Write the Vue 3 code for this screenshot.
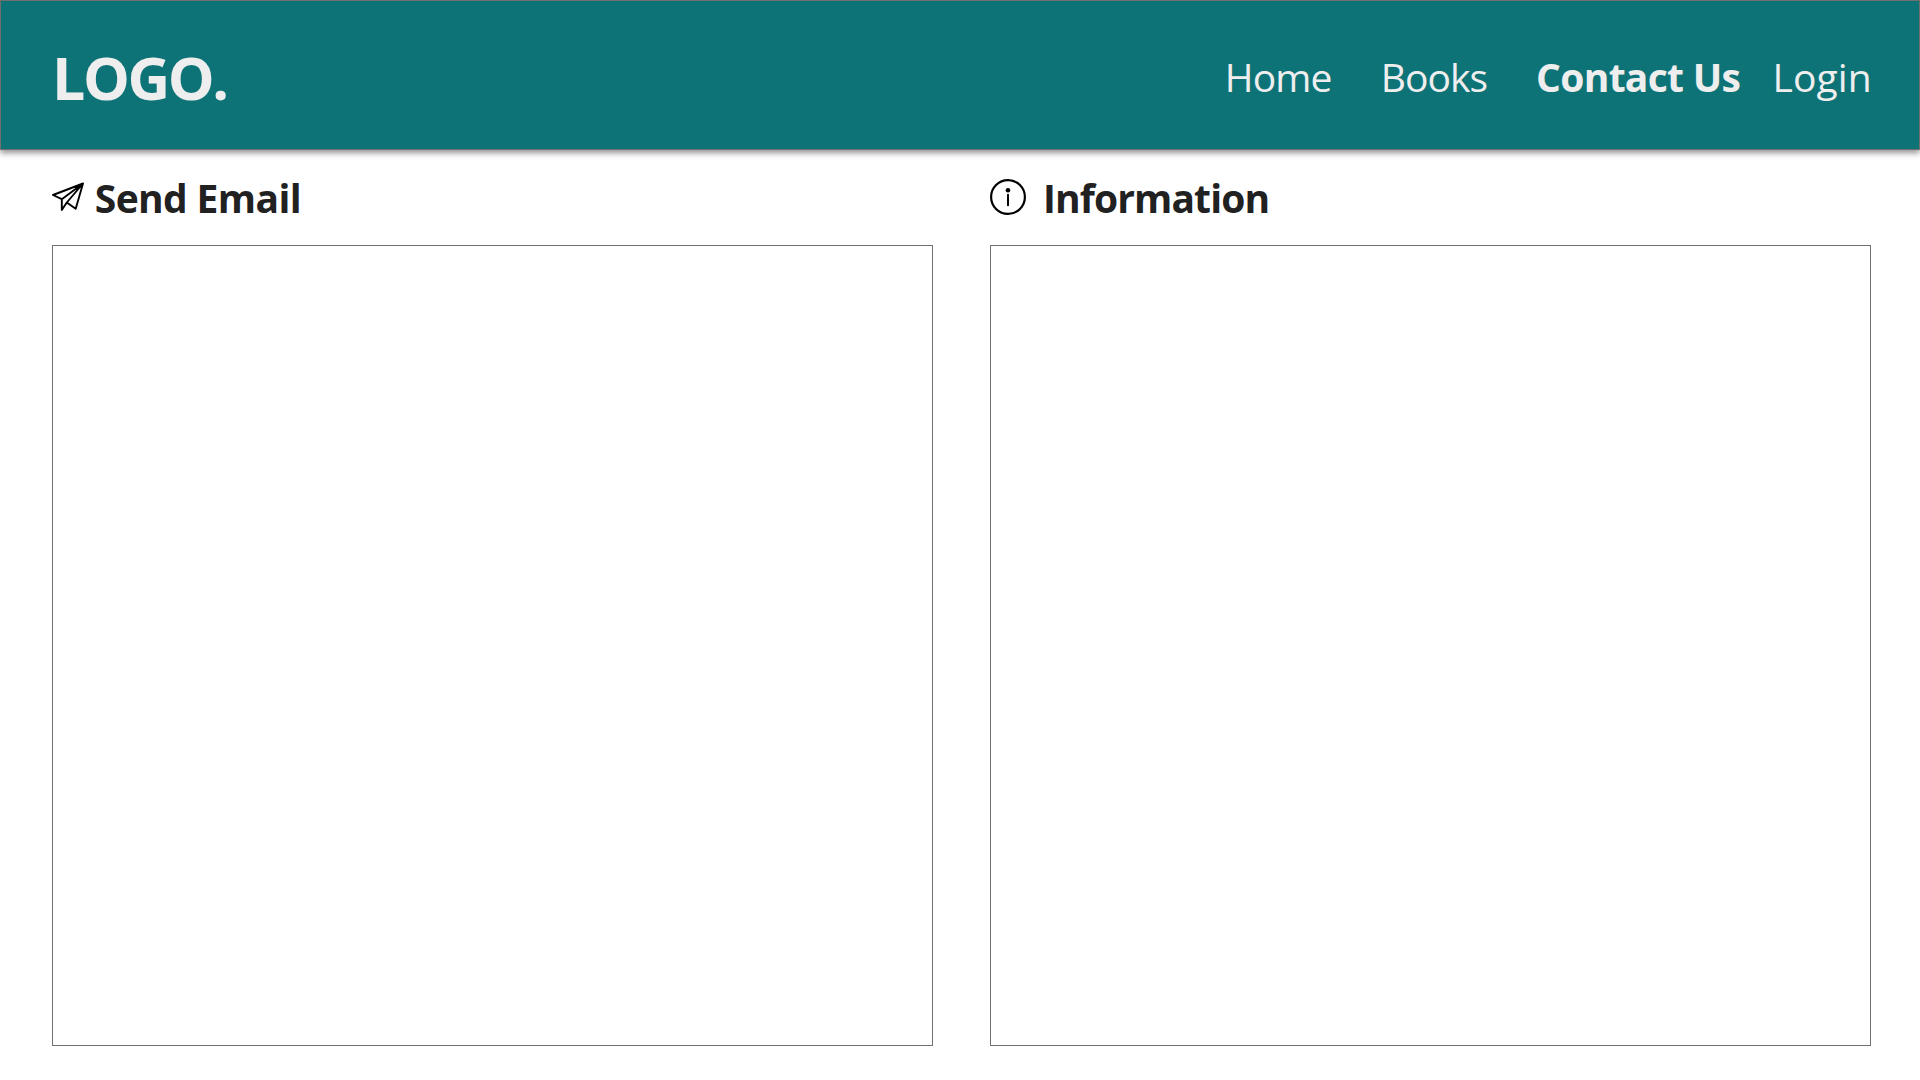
<script setup>
const links = [
  { label: 'Home', cls: 'home' },
  { label: 'Books', cls: 'books' },
  { label: 'Contact Us', cls: 'contact' },
  { label: 'Login', cls: 'login' },
]
</script>

<template>
  <div class="page">
    <header class="bar">
      <div class="logo">LOGO.</div>
      <nav class="nav">
        <a v-for="l in links" :key="l.label" :class="l.cls">{{ l.label }}</a>
      </nav>
    </header>
    <main class="columns">
      <section class="column">
        <h2 class="heading">
          <svg class="plane" width="33" height="30" viewBox="0 0 33 30" fill="none" stroke="#000" stroke-width="1.9" stroke-linejoin="round">
            <path d="M31 1.5 1 13l8.8 4.2zM31 1.5 9.8 17.2V28l5-7.5zM31 1.5 14.8 20.5l8.9 6.2z" />
          </svg>
          <span class="send">Send Email</span>
        </h2>
        <div class="panel"></div>
      </section>
      <section class="column">
        <h2 class="heading">
          <svg class="info" width="36" height="36" viewBox="0 0 36 36">
            <circle cx="18" cy="18" r="16.9" fill="none" stroke="#000" stroke-width="2.2" />
            <circle cx="18" cy="11.2" r="2.3" />
            <path d="M18 15.8v10.4" stroke="#000" stroke-width="2" stroke-linecap="round" />
          </svg>
          <span class="information">Information</span>
        </h2>
        <div class="panel"></div>
      </section>
    </main>
  </div>
</template>

<style>
body {
  margin: 0;
  background: #fff;
}
</style>

<style scoped>
.page {
  width: 1920px;
  height: 1080px;
  overflow: hidden;
  background: #fff;
  font-family: "Segoe UI", "Open Sans", "Noto Sans", sans-serif;
  font-size: 39px;
  line-height: 53px;
  white-space: nowrap;
}
.bar {
  box-sizing: border-box;
  height: 150px;
  display: flex;
  justify-content: space-between;
  border: 1px solid #707070;
  background: #0e7377;
  box-shadow: 0 3px 6px rgba(0, 0, 0, 0.43);
  color: #eee;
}
.logo {
  padding: 36px 0 0 51px;
  font-size: 59px;
  line-height: 80px;
  font-weight: 700;
  letter-spacing: -2.4px;
}
.nav {
  display: grid;
  grid-template-columns: 156px 155.3px 236.4px 146.5px;
  padding-top: 49px;
}
.home {
  letter-spacing: -0.85px;
}
.books {
  letter-spacing: -0.97px;
}
.contact {
  font-weight: 700;
  letter-spacing: -0.7px;
}
.login {
  letter-spacing: 0.1px;
}
.columns {
  display: flex;
  gap: 57px;
  padding: 21px 49px 0 52px;
}
.column {
  width: 881px;
}
.heading {
  display: flex;
  height: 53px;
  margin: 0 0 21px;
  font-size: 39px;
  font-weight: 700;
  color: #212121;
}
.plane {
  margin-top: 11px;
}
.info {
  margin-top: 8px;
}
.send {
  margin-left: 9.8px;
  letter-spacing: -0.63px;
}
.information {
  margin-left: 16.9px;
  letter-spacing: -0.88px;
}
.panel {
  box-sizing: border-box;
  height: 801px;
  border: 1px solid #707070;
  background: #fff;
}
</style>
